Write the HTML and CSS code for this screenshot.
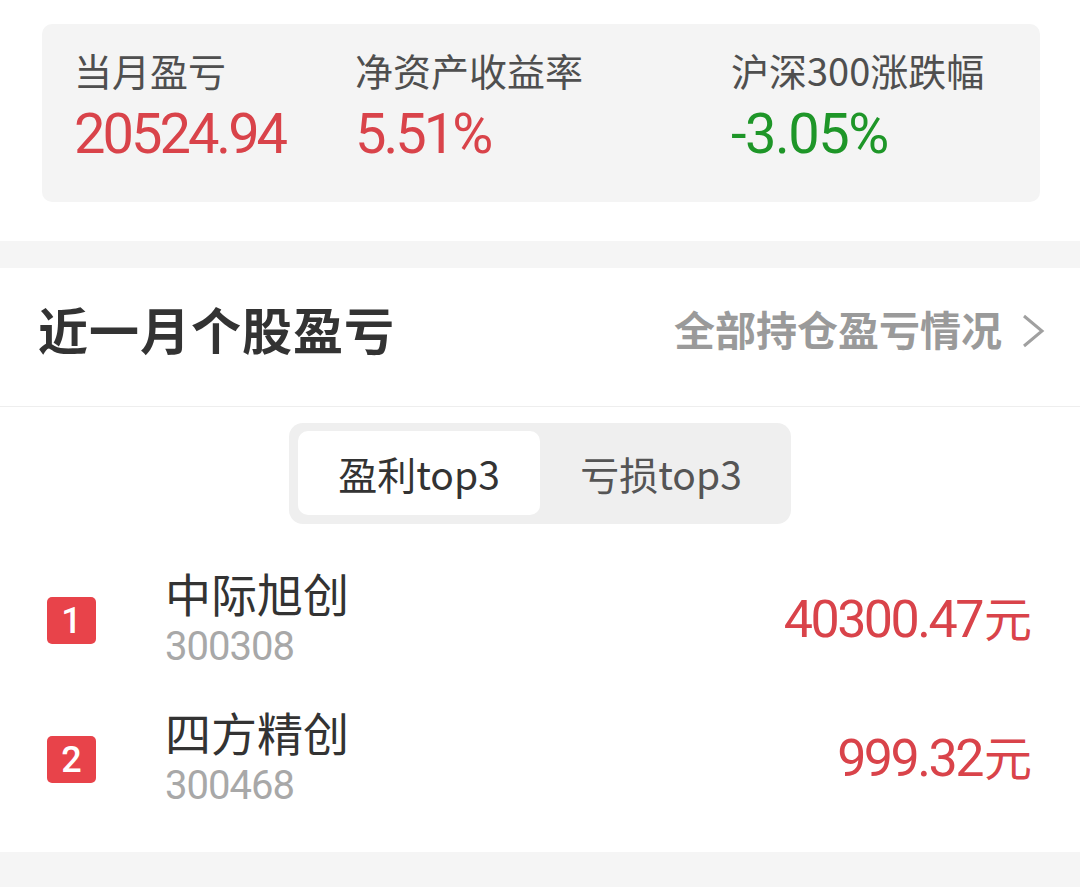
FILE: index.html
```html
<!DOCTYPE html>
<html lang="zh-CN">

<head>
    <meta charset="UTF-8">
    <meta name="viewport" content="width=device-width, initial-scale=1.0">
    <title>近一月个股盈亏</title>
    <link rel="stylesheet" href="styles.css">
</head>

<body>
    <!-- Monthly summary -->
    <div class="summary">
        <div class="summary-card">
            <div class="stat">
                <div class="stat-label">当月盈亏</div>
                <div class="stat-value up">20524.94</div>
            </div>
            <div class="stat">
                <div class="stat-label">净资产收益率</div>
                <div class="stat-value up">5.51%</div>
            </div>
            <div class="stat">
                <div class="stat-label">沪深300涨跌幅</div>
                <div class="stat-value down">-3.05%</div>
            </div>
        </div>
    </div>
    <div class="gap"></div>

    <!-- Stock P&L -->
    <div class="section">
        <div class="section-head">
            <h2 class="section-title">近一月个股盈亏</h2>
            <a href="#" class="more">全部持仓盈亏情况
                <svg width="26" height="36" viewBox="0 0 26 36">
                    <polyline points="4,3 22,18 4,33" fill="none" stroke="#a0a0a0" stroke-width="3" />
                </svg>
            </a>
        </div>
        <div class="tabs">
            <div class="tab active">盈利top3</div>
            <div class="tab">亏损top3</div>
        </div>
        <ul class="rank-list">
            <li class="rank-row">
                <span class="badge">1</span>
                <div class="stock">
                    <div class="stock-name">中际旭创</div>
                    <div class="stock-code">300308</div>
                </div>
                <div class="amount"><span class="num">40300.47</span><span class="unit">元</span></div>
            </li>
            <li class="rank-row">
                <span class="badge">2</span>
                <div class="stock">
                    <div class="stock-name">四方精创</div>
                    <div class="stock-code">300468</div>
                </div>
                <div class="amount"><span class="num">999.32</span><span class="unit">元</span></div>
            </li>
        </ul>
    </div>
    <div class="gap gap-bottom"></div>
</body>

</html>
```

FILE: styles.css
```css
:root {
    --red: #d9434a;
    --badge: #e8434a;
    --green: #1e9628;
    --band: #f5f5f5;
    --text: #333;
    --muted: #a8a8a8;
    --cjk: "Noto Sans CJK SC", sans-serif;
    --num: Roboto, "Noto Sans CJK SC", sans-serif;
}

* {
    margin: 0;
    padding: 0;
    box-sizing: border-box;
}

body {
    width: 1080px;
    background: #fff;
    color: var(--text);
    font-family: var(--cjk);
}

/* Summary card */
.summary {
    padding: 24px 40px 39px 42px;
}

.summary-card {
    height: 178px;
    background: #f4f4f4;
    border-radius: 10px;
    padding: 26px 0 0 32px;
    display: grid;
    grid-template-columns: 281px 376px 1fr;
}

.stat-label {
    font-size: 38px;
    line-height: 40px;
    color: #4f4f4f;
}

.stat-value {
    margin-top: 16px;
    font-family: var(--num);
    font-size: 56px;
    line-height: 56px;
    letter-spacing: -3px;
}

.stat-value.down {
    letter-spacing: -1.5px;
}

.up {
    color: var(--red);
}

.down {
    color: var(--green);
}

.gap {
    height: 27px;
    background: var(--band);
}

.gap-bottom {
    height: 40px;
}

/* Section */
.section-head {
    height: 139px;
    padding: 30px 34px 0 38px;
    display: flex;
    justify-content: space-between;
    align-items: flex-start;
    border-bottom: 1px solid #eee;
}

.section-title {
    font-size: 50px;
    line-height: 60px;
    font-weight: 700;
    color: #333;
    letter-spacing: 1px;
}

.more {
    display: flex;
    align-items: center;
    gap: 18px;
    font-size: 41px;
    line-height: 60px;
    font-weight: 700;
    color: #9a9a9a;
    text-decoration: none;
}

.more svg {
    margin-top: 6px;
}

/* Tabs */
.tabs {
    width: 502px;
    margin: 16px auto 0;
    padding: 8px 9px 9px;
    background: #efefef;
    border-radius: 14px;
    display: flex;
}

.tab {
    flex: 1;
    height: 84px;
    display: flex;
    align-items: center;
    justify-content: center;
    font-size: 39px;
    color: #555;
    border-radius: 10px;
}

.tab.active {
    background: #fff;
    color: #333;
}

/* Rank list */
.rank-list {
    list-style: none;
    margin-top: 27px;
    padding-bottom: 23px;
}

.rank-row {
    height: 139px;
    padding: 0 48px 0 47px;
    display: flex;
    align-items: center;
}

.badge {
    width: 49px;
    height: 47px;
    border-radius: 5px;
    background: var(--badge);
    color: #fff;
    font-family: var(--num);
    font-size: 36px;
    font-weight: 500;
    display: flex;
    align-items: center;
    justify-content: center;
}

.stock {
    margin-left: 69px;
    flex: 1;
    margin-bottom: 6px;
}

.stock-name {
    font-size: 46px;
    line-height: 50px;
    color: #333;
}

.stock-code {
    margin-top: 8px;
    font-family: var(--num);
    font-size: 40px;
    line-height: 44px;
    letter-spacing: -1px;
    color: var(--muted);
}

.amount {
    color: var(--red);
    margin-bottom: 10px;
    display: flex;
    align-items: baseline;
}

.amount .num {
    font-family: var(--num);
    font-size: 52px;
    letter-spacing: -2.5px;
}

.amount .unit {
    font-size: 48px;
    margin-left: 2px;
}
```
